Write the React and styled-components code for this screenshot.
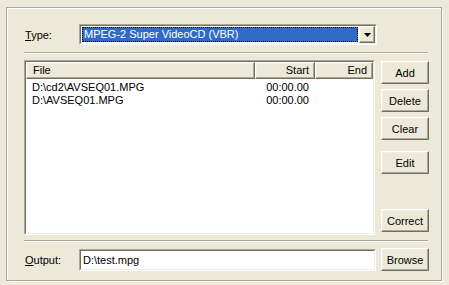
import React from "react";
import styled, { createGlobalStyle } from "styled-components";

const Global = createGlobalStyle`
  html, body { margin: 0; padding: 0; background: #ece9d8; }
  body { font-family: "Liberation Sans", sans-serif; font-size: 11px; color: #000; }
`;

const Page = styled.div`
  width: 449px;
  height: 285px;
  box-sizing: border-box;
  padding: 8px 8px 5px 7px;
  background: #ece9d8;
`;

const Panel = styled.div`
  box-sizing: border-box;
  height: 272px;
  border-left: 1px solid #fff;
  border-top: 1px solid #fff;
  box-shadow: 1px 1px 0 #aca899, 2px 2px 0 #fff;
  outline: 1px solid #aca899;
  padding: 15px 12px 0 16px;
  display: flex;
  flex-direction: column;
`;

const Row = styled.div`
  display: flex;
  align-items: center;
  height: ${(p) => p.$h}px;
`;

const Label = styled.div`
  width: 55px;
  padding-left: 1px;
  box-sizing: border-box;
  font-size: 11px;
`;

const Sunken = styled.div`
  box-sizing: border-box;
  border-top: 1px solid #aca899;
  border-left: 1px solid #aca899;
  border-right: 1px solid #fff;
  border-bottom: 1px solid #fff;
  background: #fff;
`;

const SunkenInner = styled.div`
  box-sizing: border-box;
  border-top: 1px solid #716f64;
  border-left: 1px solid #716f64;
  border-right: 1px solid #f1efe2;
  border-bottom: 1px solid #f1efe2;
  height: 100%;
  background: #fff;
  display: flex;
`;

const Combo = styled(Sunken)`
  width: 298px;
  height: 21px;
`;

const ComboText = styled.div`
  flex: 1;
  margin: 1px;
  background: #316ac5;
  color: #fff;
  outline: 1px dotted #000;
  outline-offset: -1px;
  font-size: 11px;
  line-height: 15px;
  padding-left: 2px;
  white-space: nowrap;
`;

const Raised = styled.div`
  box-sizing: border-box;
  background: #ece9d8;
  border-top: 1px solid #fff;
  border-left: 1px solid #fff;
  border-right: 1px solid #716f64;
  border-bottom: 1px solid #716f64;
  box-shadow: inset -1px -1px 0 #aca899, inset 1px 1px 0 #f1efe2;
`;

const DropBtn = styled(Raised)`
  width: 16px;
  height: 17px;
  display: flex;
  align-items: center;
  justify-content: center;
`;

const Separator = styled.div`
  height: 2px;
  margin-top: ${(p) => p.$mt}px;
  border-top: 1px solid #aca899;
  border-bottom: 1px solid #fff;
  box-sizing: border-box;
  width: 404px;
`;

const Main = styled.div`
  display: flex;
  gap: 6px;
  margin-top: 6px;
`;

const ListBox = styled(Sunken)`
  width: 351px;
  height: 175px;
`;

const ListInner = styled(SunkenInner)`
  flex-direction: column;
`;

const Header = styled.div`
  display: flex;
  height: 17px;
`;

const HeadCell = styled(Raised)`
  width: ${(p) => p.$w}px;
  height: 17px;
  padding: 0 ${(p) => (p.$right ? 5 : 6)}px;
  text-align: ${(p) => (p.$right ? "right" : "left")};
  font-size: 11px;
  line-height: 15px;
`;

const Rows = styled.div`
  display: flex;
  flex-direction: column;
  padding-top: 2px;
`;

const ListRow = styled.div`
  display: flex;
  height: 13px;
  line-height: 13px;
  font-size: 11px;
`;

const Cell = styled.div`
  width: ${(p) => p.$w}px;
  box-sizing: border-box;
  padding: 0 6px;
  text-align: ${(p) => (p.$right ? "right" : "left")};
  white-space: nowrap;
`;

const Buttons = styled.div`
  display: flex;
  flex-direction: column;
  padding-top: 1px;
`;

const Button = styled(Raised)`
  width: 48px;
  height: 23px;
  margin-top: ${(p) => p.$mt || 0}px;
  margin-left: ${(p) => p.$ml || 0}px;
  display: flex;
  align-items: center;
  justify-content: center;
  font-size: 11px;
`;

const Input = styled(Sunken)`
  width: 297px;
  height: 22px;
`;

const InputText = styled.div`
  padding-left: 2px;
  line-height: 18px;
  font-size: 11px;
`;

const OutputRow = styled(Row)`
  margin-top: 6px;
`;

export default function App() {
  return (
    <Page>
      <Global />
      <Panel>
        <Row $h={21}>
          <Label>
            <u>T</u>ype:
          </Label>
          <Combo>
            <SunkenInner>
              <ComboText>MPEG-2 Super VideoCD (VBR)</ComboText>
              <DropBtn>
                <svg width="7" height="4" viewBox="0 0 7 4">
                  <path d="M0 0h7L3.5 4z" fill="#000" />
                </svg>
              </DropBtn>
            </SunkenInner>
          </Combo>
        </Row>
        <Separator $mt={7} />
        <Main>
          <ListBox>
            <ListInner>
              <Header>
                <HeadCell $w={229}>File</HeadCell>
                <HeadCell $w={60} $right>Start</HeadCell>
                <HeadCell $w={58} $right>End</HeadCell>
              </Header>
              <Rows>
                <ListRow>
                  <Cell $w={229}>D:\cd2\AVSEQ01.MPG</Cell>
                  <Cell $w={60} $right>00:00.00</Cell>
                  <Cell $w={58} $right></Cell>
                </ListRow>
                <ListRow>
                  <Cell $w={229}>D:\AVSEQ01.MPG</Cell>
                  <Cell $w={60} $right>00:00.00</Cell>
                  <Cell $w={58} $right></Cell>
                </ListRow>
              </Rows>
            </ListInner>
          </ListBox>
          <Buttons>
            <Button>Add</Button>
            <Button $mt={5}>Delete</Button>
            <Button $mt={5}>Clear</Button>
            <Button $mt={11}>Edit</Button>
            <Button $mt={35}>Correct</Button>
          </Buttons>
        </Main>
        <Separator $mt={5} />
        <OutputRow $h={23}>
          <Label>
            <u>O</u>utput:
          </Label>
          <Input>
            <SunkenInner>
              <InputText>D:\test.mpg</InputText>
            </SunkenInner>
          </Input>
          <Button $ml={5}>Browse</Button>
        </OutputRow>
      </Panel>
    </Page>
  );
}
